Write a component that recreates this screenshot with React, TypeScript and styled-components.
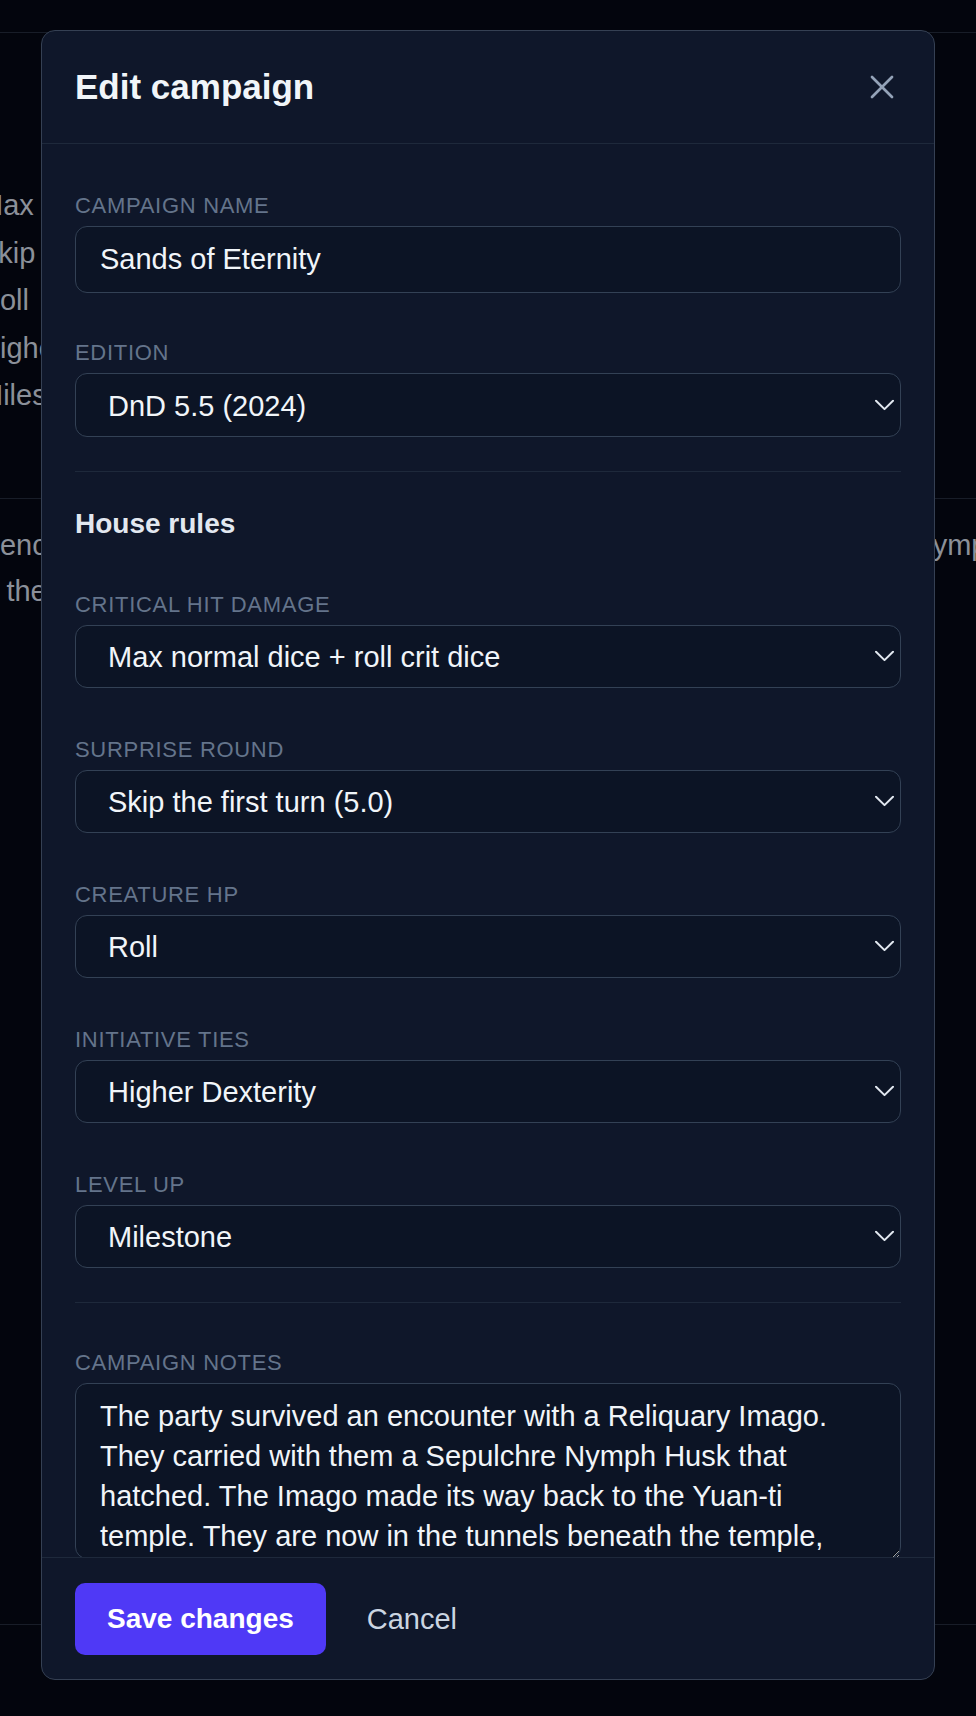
import React from "react";
import styled, { createGlobalStyle } from "styled-components";

const GlobalStyle = createGlobalStyle`
  * { box-sizing: border-box; }
  html, body {
    margin: 0;
    padding: 0;
    background: #03050d;
    font-family: "Liberation Sans", Arial, sans-serif;
  }
`;

const Page = styled.div`
  position: relative;
  width: 976px;
  height: 1716px;
  overflow: hidden;
  background: #03050d;
`;

// page behind the dialog
const TopBar = styled.div`
  height: 33px;
  border-bottom: 1px solid #181d28;
`;

const ValueList = styled.div`
  margin: 149px 0 0 -21px;
  display: flex;
  flex-direction: column;
`;

const ValueRow = styled.div`
  font-size: 29px;
  line-height: 47.5px;
  color: #8b9099;
  white-space: nowrap;
`;

const BgRule = styled.div<{ $top: number }>`
  margin-top: ${(p) => p.$top}px;
  height: 1px;
  background: #181d28;
`;

const BgNotes = styled.div`
  margin: 23px 0 0 -287px;
  font-size: 29px;
  line-height: 46px;
  color: #8b9099;
  white-space: nowrap;
`;

const Overlay = styled.div`
  position: absolute;
  inset: 0;
  display: flex;
  justify-content: center;
  align-items: flex-start;
  padding-top: 30px;
`;

const Modal = styled.div`
  width: 894px;
  height: 1650px;
  display: flex;
  flex-direction: column;
  background: #0f172a;
  border: 1px solid #354053;
  border-radius: 14px;
  overflow: hidden;
`;

const Header = styled.div`
  height: 113px;
  flex-shrink: 0;
  display: flex;
  align-items: center;
  justify-content: space-between;
  padding: 0 32px 0 33px;
  border-bottom: 1px solid #1e293b;
`;

const Title = styled.h2`
  margin: 0;
  font-size: 35px;
  line-height: 42px;
  font-weight: 700;
  color: #f1f5f9;
`;

const CloseButton = styled.button`
  width: 40px;
  height: 40px;
  padding: 0;
  border: none;
  background: transparent;
  color: #94a3b8;
  display: flex;
  align-items: center;
  justify-content: center;
  cursor: pointer;
`;

const Body = styled.div`
  flex: 1;
  min-height: 0;
  overflow: hidden;
  padding: 48px 33px 0;
  display: flex;
  flex-direction: column;

  & > * {
    flex-shrink: 0;
  }
`;

const Group = styled.div<{ $gap: number }>`
  display: flex;
  flex-direction: column;
  gap: ${(p) => p.$gap}px;
`;

const Field = styled.label`
  display: flex;
  flex-direction: column;
  gap: 6px;
`;

const Label = styled.span`
  font-size: 22px;
  line-height: 28px;
  letter-spacing: 0.7px;
  text-transform: uppercase;
  color: #64748b;
`;

const TextInput = styled.input`
  height: 67px;
  width: 100%;
  padding: 0 24px;
  border: 1px solid #334155;
  border-radius: 12px;
  background: #0c1425;
  color: #f1f5f9;
  font-family: inherit;
  font-size: 29px;
  outline: none;
`;

const SelectWrap = styled.div`
  position: relative;
`;

const Select = styled.select`
  height: 63.5px;
  width: 100%;
  padding: 2px 48px 0 32px;
  appearance: none;
  border: 1px solid #334155;
  border-radius: 12px;
  background: #0c1425;
  color: #f1f5f9;
  font-family: inherit;
  font-size: 29px;
  outline: none;
`;

const Chevron = styled.svg`
  position: absolute;
  right: 7px;
  top: 50%;
  transform: translateY(-50%);
  pointer-events: none;
`;

const Rule = styled.div<{ $after: number }>`
  margin: 34px 0 ${(p) => p.$after}px;
  height: 1px;
  background: #1e293b;
`;

const SectionTitle = styled.h3`
  margin: 0 0 50px;
  font-size: 28px;
  line-height: 34px;
  font-weight: 700;
  color: #e2e8f0;
`;

const Notes = styled.textarea`
  height: 176px;
  width: 100%;
  padding: 12px 24px;
  border: 1px solid #334155;
  border-radius: 12px;
  background: #0c1425;
  color: #f1f5f9;
  font-family: inherit;
  font-size: 29px;
  line-height: 40px;
  resize: vertical;
  outline: none;
  overflow: hidden;
`;

const Footer = styled.div`
  flex-shrink: 0;
  display: flex;
  align-items: center;
  gap: 41px;
  padding: 25px 33px 24px;
  border-top: 1px solid #1e293b;
`;

const PrimaryButton = styled.button`
  height: 72px;
  padding: 0 32px;
  border: none;
  border-radius: 10px;
  background: #4f39f6;
  color: #ffffff;
  font-family: inherit;
  font-size: 28px;
  font-weight: 700;
  cursor: pointer;
`;

const GhostButton = styled.button`
  padding: 0;
  border: none;
  background: transparent;
  color: #cbd5e1;
  font-family: inherit;
  font-size: 29px;
  cursor: pointer;
`;

const rules = [
  { label: "Critical hit damage", value: "Max normal dice + roll crit dice" },
  { label: "Surprise round", value: "Skip the first turn (5.0)" },
  { label: "Creature HP", value: "Roll" },
  { label: "Initiative ties", value: "Higher Dexterity" },
  { label: "Level up", value: "Milestone" },
];

const notes =
  "The party survived an encounter with a Reliquary Imago. They carried with them a Sepulchre Nymph Husk that hatched. The Imago made its way back to the Yuan-ti temple. They are now in the tunnels beneath the temple, searching for the lair of the Imago.";

const ChevronIcon = () => (
  <Chevron width="19" height="11" viewBox="0 0 19 11" fill="none">
    <path d="M1 1.2 L9.5 9.6 L18 1.2" stroke="#e2e8f0" strokeWidth="2" strokeLinecap="round" strokeLinejoin="round" />
  </Chevron>
);

const SelectField = ({ label, value }: { label: string; value: string }) => (
  <Field>
    <Label>{label}</Label>
    <SelectWrap>
      <Select defaultValue={value}>
        <option>{value}</option>
      </Select>
      <ChevronIcon />
    </SelectWrap>
  </Field>
);

export default function App() {
  return (
    <>
      <GlobalStyle />
      <Page>
        <TopBar />
        <ValueList>
          {rules.map((r) => (
            <ValueRow key={r.label}>{r.value}</ValueRow>
          ))}
        </ValueList>
        <BgRule $top={78} />
        <BgNotes>
          <div>The party survived an encounter with a Reliquary Imago. They carried with them a Sepulchre Nymph Husk that hatched.</div>
          <div>Imago they are now in the tunnels beneath the temple.</div>
        </BgNotes>
        <BgRule $top={1010} />

        <Overlay>
          <Modal>
            <Header>
              <Title>Edit campaign</Title>
              <CloseButton aria-label="Close">
                <svg width="40" height="40" viewBox="0 0 24 24" fill="none" stroke="currentColor" strokeWidth="1.6" strokeLinecap="round">
                  <path d="M18 6 6 18" />
                  <path d="m6 6 12 12" />
                </svg>
              </CloseButton>
            </Header>

            <Body>
              <Group $gap={46}>
                <Field>
                  <Label>Campaign name</Label>
                  <TextInput defaultValue="Sands of Eternity" />
                </Field>
                <SelectField label="Edition" value="DnD 5.5 (2024)" />
              </Group>

              <Rule $after={35} />
              <SectionTitle>House rules</SectionTitle>

              <Group $gap={47.5}>
                {rules.map((r) => (
                  <SelectField key={r.label} label={r.label} value={r.value} />
                ))}
              </Group>

              <Rule $after={46} />
              <Field>
                <Label>Campaign notes</Label>
                <Notes defaultValue={notes} />
              </Field>
            </Body>

            <Footer>
              <PrimaryButton>Save changes</PrimaryButton>
              <GhostButton>Cancel</GhostButton>
            </Footer>
          </Modal>
        </Overlay>
      </Page>
    </>
  );
}
